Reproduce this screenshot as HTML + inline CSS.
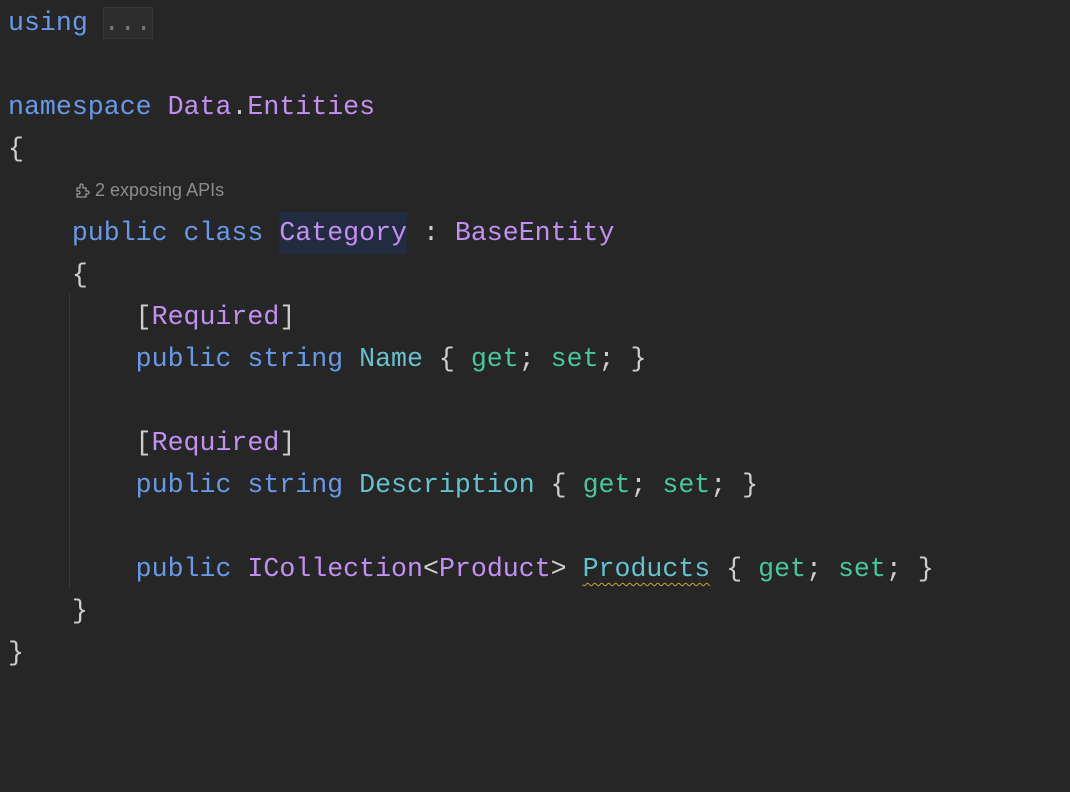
<!DOCTYPE html>
<html><head><meta charset="utf-8"><style>
html,body{margin:0;padding:0;background:#262626;width:1070px;height:792px;overflow:hidden}
.code{position:absolute;left:8px;top:2px;font-family:"Liberation Mono",monospace;font-size:26.6px;line-height:42px;color:#cdcdcd;white-space:pre}
.l{height:42px}
.k{color:#6a98e9}.p{color:#c290f1}.t{color:#66c1cc}.g{color:#48c79a}.d{color:#777}
.hl{background:#222b40;display:inline-block;height:42px}
.dots{background:#2d2d2d;outline:1px solid #383838;color:#777}
.sq{text-decoration:underline wavy #c9a630;text-decoration-thickness:1px;text-underline-offset:6px}
.hint{font-family:"Liberation Sans",sans-serif;font-size:18px;color:#8c8c8c;position:absolute;left:75px;top:180px}
.guide{position:absolute;left:69px;top:294px;width:1px;height:294px;background:#3a3a3a}
</style></head><body>
<div class="guide"></div>
<div class="code"><div class="l"><span class="k">using</span> <span class="dots">...</span></div><div class="l"></div><div class="l"><span class="k">namespace</span> <span class="p">Data</span>.<span class="p">Entities</span></div><div class="l">{</div><div class="l"></div><div class="l">    <span class="k">public class</span> <span class="hl p">Category</span> : <span class="p">BaseEntity</span></div><div class="l">    {</div><div class="l">        [<span class="p">Required</span>]</div><div class="l">        <span class="k">public string</span> <span class="t">Name</span> { <span class="g">get</span>; <span class="g">set</span>; }</div><div class="l"></div><div class="l">        [<span class="p">Required</span>]</div><div class="l">        <span class="k">public string</span> <span class="t">Description</span> { <span class="g">get</span>; <span class="g">set</span>; }</div><div class="l"></div><div class="l">        <span class="k">public</span> <span class="p">ICollection</span>&lt;<span class="p">Product</span>&gt; <span class="t sq">Products</span> { <span class="g">get</span>; <span class="g">set</span>; }</div><div class="l">    }</div><div class="l">}</div></div>
<div class="hint"><svg width="16" height="16" viewBox="0 0 16 16" style="vertical-align:-2px;margin-right:4px"><path d="M2 6h3V3.5a1.5 1.5 0 0 1 3 0V6h3v3h1.5a1.5 1.5 0 0 1 0 3H11v3H2v-3h1.5a1.5 1.5 0 0 0 0-3H2z" fill="none" stroke="#9a9a9a" stroke-width="1.3"/></svg>2 exposing APIs</div>
</body></html>
